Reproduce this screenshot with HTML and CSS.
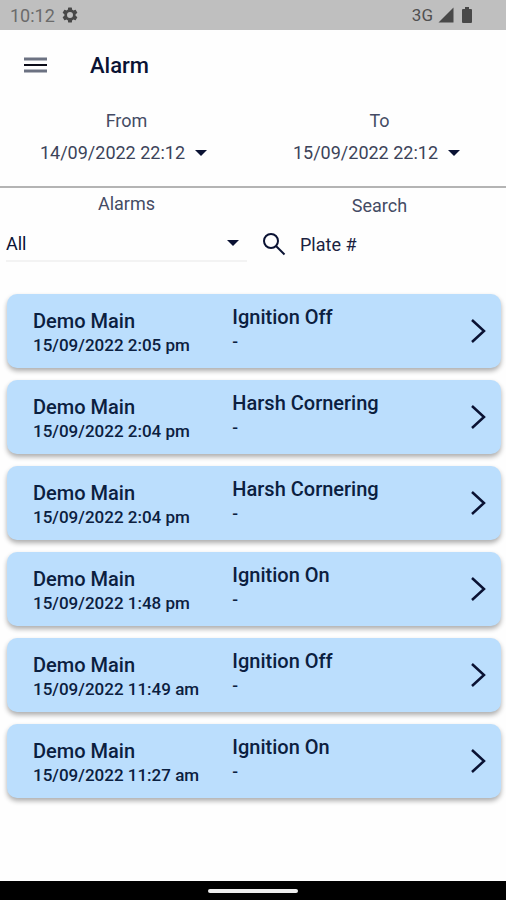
FILE: index.html
```html
<!DOCTYPE html>
<html lang="en">
<head>
<meta charset="utf-8">
<meta name="viewport" content="width=device-width, initial-scale=1">
<title>Alarm</title>
<link rel="stylesheet" href="styles.css">
</head>
<body>
<div class="status">
  <span class="clock">10:12</span>
  <svg class="gear" viewBox="0 0 24 24" aria-hidden="true"><path d="M19.43 12.98c.04-.32.07-.64.07-.98s-.03-.66-.07-.98l2.11-1.65a.5.5 0 0 0 .12-.64l-2-3.46a.5.5 0 0 0-.61-.22l-2.49 1a7.3 7.3 0 0 0-1.69-.98l-.38-2.65A.49.49 0 0 0 14 2h-4a.49.49 0 0 0-.49.42l-.38 2.65c-.61.25-1.17.59-1.69.98l-2.49-1a.5.5 0 0 0-.61.22l-2 3.46a.49.49 0 0 0 .12.64l2.11 1.65c-.04.32-.07.65-.07.98s.03.66.07.98l-2.11 1.65a.5.5 0 0 0-.12.64l2 3.46c.12.22.39.3.61.22l2.49-1c.52.4 1.08.73 1.69.98l.38 2.65c.03.24.24.42.49.42h4c.25 0 .46-.18.49-.42l.38-2.65a7.3 7.3 0 0 0 1.69-.98l2.49 1c.23.09.49 0 .61-.22l2-3.46a.5.5 0 0 0-.12-.64zM12 16a4 4 0 1 1 0-8 4 4 0 0 1 0 8z" fill-rule="evenodd"/></svg>
  <span class="network">3G</span>
  <svg class="signal" viewBox="0 0 16 16" aria-hidden="true"><path d="M15.500 0.500V15.500H0.500z"/></svg>
  <svg class="battery" viewBox="0 0 10 16" aria-hidden="true"><path d="M3 0h4v2h2q1 0 1 1v12q0 1-1 1H1q-1 0-1-1V3q0-1 1-1h2z"/></svg>
</div>
<header class="appbar">
  <button class="menu" type="button" aria-label="Menu">
    <svg viewBox="0 0 24 16" aria-hidden="true"><path class="soft" d="M0 2h23M0 14h23"/><path d="M0 8h23"/></svg>
  </button>
  <h1>Alarm</h1>
</header>
<main>
  <section class="range">
    <div class="field">
      <span class="label" id="from">From</span>
      <button class="date" type="button" aria-describedby="from">14/09/2022 22:12 <i class="caret"></i></button>
    </div>
    <div class="field">
      <span class="label" id="to">To</span>
      <button class="date" type="button" aria-describedby="to">15/09/2022 22:12 <i class="caret"></i></button>
    </div>
  </section>
  <section class="filters">
    <div class="filter">
      <label class="label" for="alarms">Alarms</label>
      <div class="select"><select id="alarms"><option>All</option></select><i class="caret"></i></div>
    </div>
    <div class="filter search">
      <label class="label" for="plate">Search</label>
      <div class="query">
        <svg viewBox="0 0 24 24" aria-hidden="true"><circle cx="9" cy="9" r="7"/><path d="M14 14l8.500 8.500"/></svg>
        <input id="plate" type="text" placeholder="Plate #">
      </div>
    </div>
  </section>
  <section class="list">
    <button class="card" type="button"><span class="unit"><b>Demo Main</b><small>15/09/2022 2:05 pm</small></span><span class="event"><b>Ignition Off</b><small>-</small></span><svg viewBox="0 0 16 26" aria-hidden="true"><path d="M2 2l12 11L2 24"/></svg></button>
    <button class="card" type="button"><span class="unit"><b>Demo Main</b><small>15/09/2022 2:04 pm</small></span><span class="event"><b>Harsh Cornering</b><small>-</small></span><svg viewBox="0 0 16 26" aria-hidden="true"><path d="M2 2l12 11L2 24"/></svg></button>
    <button class="card" type="button"><span class="unit"><b>Demo Main</b><small>15/09/2022 2:04 pm</small></span><span class="event"><b>Harsh Cornering</b><small>-</small></span><svg viewBox="0 0 16 26" aria-hidden="true"><path d="M2 2l12 11L2 24"/></svg></button>
    <button class="card" type="button"><span class="unit"><b>Demo Main</b><small>15/09/2022 1:48 pm</small></span><span class="event"><b>Ignition On</b><small>-</small></span><svg viewBox="0 0 16 26" aria-hidden="true"><path d="M2 2l12 11L2 24"/></svg></button>
    <button class="card" type="button"><span class="unit"><b>Demo Main</b><small>15/09/2022 11:49 am</small></span><span class="event"><b>Ignition Off</b><small>-</small></span><svg viewBox="0 0 16 26" aria-hidden="true"><path d="M2 2l12 11L2 24"/></svg></button>
    <button class="card" type="button"><span class="unit"><b>Demo Main</b><small>15/09/2022 11:27 am</small></span><span class="event"><b>Ignition On</b><small>-</small></span><svg viewBox="0 0 16 26" aria-hidden="true"><path d="M2 2l12 11L2 24"/></svg></button>
  </section>
</main>
<footer class="navbar"><span class="handle"></span></footer>
</body>
</html>
```
FILE: styles.css
```css
* { box-sizing: border-box; }
body {
  margin: 0;
  min-height: 100vh;
  display: flex;
  flex-direction: column;
  background: #fefefe;
  color: #0a1233;
  font-family: Roboto, sans-serif;
}
button, input, select {
  font: inherit;
  color: inherit;
  background: none;
  border: 0;
  padding: 0;
  margin: 0;
}
main { flex: 1; }

.status {
  display: flex;
  align-items: center;
  height: 30px;
  padding: 0 34px 0 10px;
  background: #bfbfbf;
  color: #6b6b6b;
  font-size: 18px;
}
.status svg { fill: #484848; }
.gear { width: 18px; height: 18px; margin-left: 6px; }
.network { margin-left: auto; font-size: 17px; color: #505050; }
.signal { width: 16px; height: 16px; margin-left: 5px; }
.battery { width: 10px; height: 16px; margin-left: 8px; }

.appbar {
  display: flex;
  align-items: center;
  gap: 42px;
  height: 70px;
  padding-left: 24px;
}
.menu { display: flex; }
.menu svg {
  width: 24px;
  height: 16px;
  stroke: #0c0c18;
  stroke-width: 2;
}
.menu .soft { stroke: #6c7282; stroke-width: 3; }
h1 { margin: 0; font-size: 22px; font-weight: 500; }

.range, .filters {
  display: grid;
  grid-template-columns: repeat(2, minmax(0, 1fr));
}
.range { height: 88px; border-bottom: 2px solid #b4b4b4; }
.field {
  display: flex;
  flex-direction: column;
  align-items: center;
  gap: 8px;
  padding-top: 9px;
}
.label {
  font-size: 18px;
  line-height: 24px;
  color: #444b64;
}
.date {
  display: flex;
  align-items: center;
  gap: 10px;
  padding-right: 6px;
  font-size: 18px;
  line-height: 24px;
  color: #3c4359;
}
.caret {
  border: 6px solid transparent;
  border-top-color: #0a1233;
  border-bottom: 0;
}
.filter {
  display: flex;
  flex-direction: column;
  align-items: center;
  padding: 4px 6px 0;
}
.search { padding-top: 6px; }
.select, .query {
  display: flex;
  align-items: center;
  width: 100%;
  height: 32px;
  margin-top: 10px;
  font-size: 18px;
}
.select {
  height: 36px;
  border-bottom: 2px solid #f3f3f3;
  padding-right: 8px;
}
.select select { appearance: none; flex: 1; }
.query { gap: 14px; padding-left: 3px; }
.query svg {
  width: 24px;
  height: 24px;
  fill: none;
  stroke: #0a1233;
  stroke-width: 2;
}
.query input { flex: 1; min-width: 0; }
.query input::placeholder { color: #1b2240; opacity: 1; }

.list {
  display: flex;
  flex-direction: column;
  gap: 12px;
  padding: 32px 5px 12px 7px;
}
.card {
  display: flex;
  align-items: flex-start;
  height: 74px;
  padding: 0 15px 0 26px;
  border-radius: 10px;
  background: #bbdefd;
  box-shadow: 0 3px 5px rgba(0, 0, 0, .32);
  color: #0b2040;
  text-align: left;
}
.card svg {
  width: 16px;
  height: 26px;
  align-self: center;
  fill: none;
  stroke: #0a1233;
  stroke-width: 2.5;
}
.unit, .event { display: flex; flex-direction: column; }
.unit { flex: 0 0 44%; padding-top: 14px; }
.event { flex: 1; padding-top: 10px; }
.card b { font-size: 20px; font-weight: 500; line-height: 26px; }
.card small { font-size: 17px; font-weight: 500; line-height: 22px; }

.navbar {
  display: flex;
  justify-content: center;
  align-items: center;
  height: 19px;
  background: #000;
}
.handle { width: 90px; height: 4px; border-radius: 2px; background: #eee; }
```
